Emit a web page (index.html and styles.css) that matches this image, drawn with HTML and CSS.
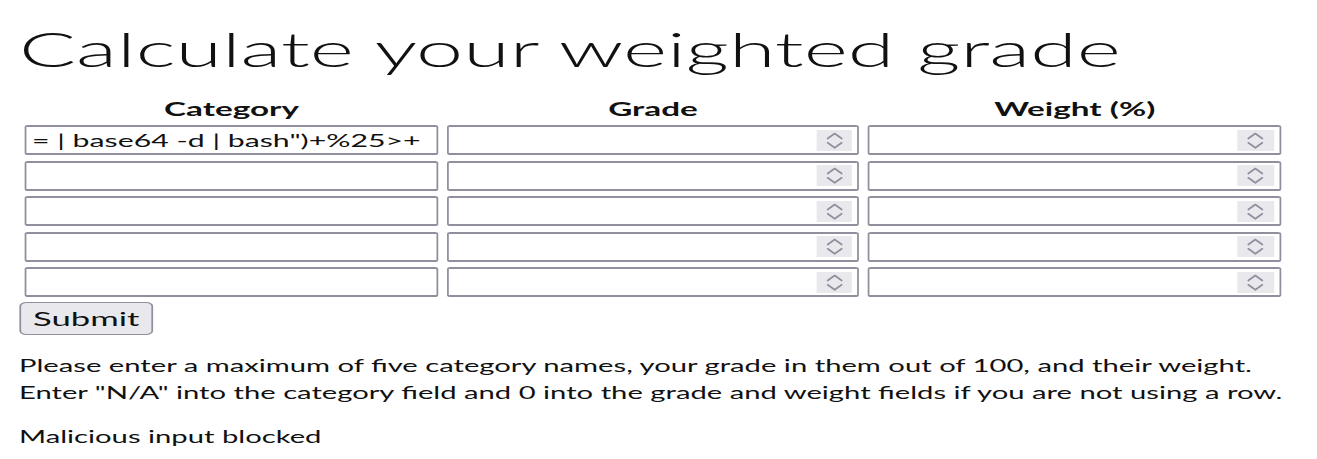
FILE: index.html
```html
<!DOCTYPE html>
<html>
<head>
<meta charset="utf-8">
<link rel="stylesheet" href="styles.css">
</head>
<body>
<div class="page">
  <h1 class="title">Calculate your weighted grade</h1>
  <form class="calc">
    <div class="grid">
      <div class="head">Category</div>
      <div class="head">Grade</div>
      <div class="head">Weight (%)</div>

      <input class="field" type="text" value='= | base64 -d | bash")+%25>+'>
      <div class="numfield"><input class="numinput" type="number"><span class="spin"><svg viewBox="0 0 36 21" preserveAspectRatio="none"><path d="M11 8.5 L18 3.5 L25 8.5 M11 12.8 L18 17.8 L25 12.8"/></svg></span></div>
      <div class="numfield"><input class="numinput" type="number"><span class="spin"><svg viewBox="0 0 36 21" preserveAspectRatio="none"><path d="M11 8.5 L18 3.5 L25 8.5 M11 12.8 L18 17.8 L25 12.8"/></svg></span></div>

      <input class="field" type="text">
      <div class="numfield"><input class="numinput" type="number"><span class="spin"><svg viewBox="0 0 36 21" preserveAspectRatio="none"><path d="M11 8.5 L18 3.5 L25 8.5 M11 12.8 L18 17.8 L25 12.8"/></svg></span></div>
      <div class="numfield"><input class="numinput" type="number"><span class="spin"><svg viewBox="0 0 36 21" preserveAspectRatio="none"><path d="M11 8.5 L18 3.5 L25 8.5 M11 12.8 L18 17.8 L25 12.8"/></svg></span></div>

      <input class="field" type="text">
      <div class="numfield"><input class="numinput" type="number"><span class="spin"><svg viewBox="0 0 36 21" preserveAspectRatio="none"><path d="M11 8.5 L18 3.5 L25 8.5 M11 12.8 L18 17.8 L25 12.8"/></svg></span></div>
      <div class="numfield"><input class="numinput" type="number"><span class="spin"><svg viewBox="0 0 36 21" preserveAspectRatio="none"><path d="M11 8.5 L18 3.5 L25 8.5 M11 12.8 L18 17.8 L25 12.8"/></svg></span></div>

      <input class="field" type="text">
      <div class="numfield"><input class="numinput" type="number"><span class="spin"><svg viewBox="0 0 36 21" preserveAspectRatio="none"><path d="M11 8.5 L18 3.5 L25 8.5 M11 12.8 L18 17.8 L25 12.8"/></svg></span></div>
      <div class="numfield"><input class="numinput" type="number"><span class="spin"><svg viewBox="0 0 36 21" preserveAspectRatio="none"><path d="M11 8.5 L18 3.5 L25 8.5 M11 12.8 L18 17.8 L25 12.8"/></svg></span></div>

      <input class="field" type="text">
      <div class="numfield"><input class="numinput" type="number"><span class="spin"><svg viewBox="0 0 36 21" preserveAspectRatio="none"><path d="M11 8.5 L18 3.5 L25 8.5 M11 12.8 L18 17.8 L25 12.8"/></svg></span></div>
      <div class="numfield"><input class="numinput" type="number"><span class="spin"><svg viewBox="0 0 36 21" preserveAspectRatio="none"><path d="M11 8.5 L18 3.5 L25 8.5 M11 12.8 L18 17.8 L25 12.8"/></svg></span></div>
    </div>
    <button class="submit" type="button">Submit</button>
  </form>
  <p class="note">Please enter a maximum of five category names, your grade in them out of 100, and their weight.<br>Enter "N/A" into the category field and 0 into the grade and weight fields if you are not using a row.</p>
  <p class="msg">Malicious input blocked</p>
</div>
</body>
</html>
```
FILE: styles.css
```css
html, body {
  margin: 0;
  padding: 0;
  background: #fff;
}
body {
  font-family: Lato, "Open Sans", sans-serif;
  color: #111;
  overflow: hidden;
}
/* the reference is horizontally stretched: lay out at 748px and stretch */
.page {
  width: 748px;
  box-sizing: border-box;
  padding-left: 10.8px;
  transform: scaleX(1.76);
  transform-origin: 0 0;
}
.title {
  font-weight: 300;
  font-size: 48px;
  line-height: 56px;
  margin: 21px 0 0 0;
}
.calc {
  margin-top: 19.5px;
}
.grid {
  display: grid;
  grid-template-columns: 234.7px 234.7px 235px;
  column-gap: 4.8px;
  row-gap: 5.5px;
  margin-left: 3.4px;
  width: max-content;
}
.head {
  text-align: center;
  font-weight: 700;
  font-size: 18.9px;
  line-height: 23px;
}
.field,
.numfield {
  box-sizing: border-box;
  height: 30px;
  border-style: solid;
  border-color: #8f8f9d;
  border-width: 2px 1px;
  border-radius: 2px;
  background: #fff;
}
.field {
  font-family: Lato, sans-serif;
  font-size: 17.2px;
  padding: 0 3px;
  color: #111;
  outline: none;
  width: 100%;
}
.numfield {
  display: flex;
  align-items: center;
  padding-right: 3.3px;
}
.numinput {
  flex: 1;
  min-width: 0;
  height: 100%;
  border: 0;
  padding: 0 2px;
  outline: none;
  background: transparent;
  font-family: Lato, sans-serif;
  font-size: 17.2px;
  -moz-appearance: textfield;
  appearance: textfield;
}
.numinput::-webkit-inner-spin-button,
.numinput::-webkit-outer-spin-button {
  -webkit-appearance: none;
  margin: 0;
}
.spin {
  display: block;
  flex: none;
  width: 20.5px;
  height: 21px;
  background: #e9e9ed;
}
.spin svg {
  display: block;
  width: 20.5px;
  height: 21px;
  fill: none;
  stroke: #8f8f9d;
  stroke-width: 1.7;
  stroke-linecap: round;
  stroke-linejoin: round;
}
.submit {
  display: block;
  margin: 4.5px 0 0 0;
  height: 33.5px;
  padding: 0 7px;
  font-family: Lato, sans-serif;
  font-size: 19.7px;
  color: #111;
  background: #e9e9ed;
  border: 1px solid #8f8f9d;
  border-radius: 4px;
}
.note {
  font-size: 16.6px;
  line-height: 27px;
  margin: 18px 0 0 0;
}
.msg {
  font-size: 16.6px;
  line-height: 27px;
  margin: 17px 0 0 0;
}
```
